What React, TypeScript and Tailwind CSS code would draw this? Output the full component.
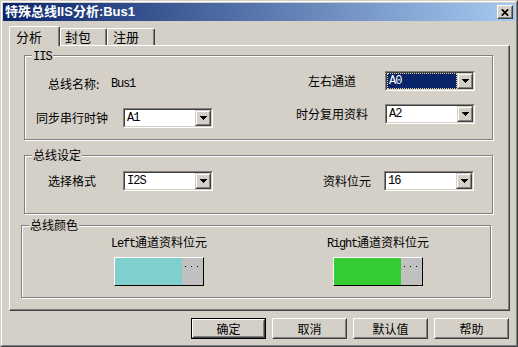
import React from "react";

function Arrow() {
  return (
    <svg width="7" height="4" viewBox="0 0 7 4" shapeRendering="crispEdges">
      <rect x="0" y="0" width="7" height="1" fill="black" />
      <rect x="1" y="1" width="5" height="1" fill="black" />
      <rect x="2" y="2" width="3" height="1" fill="black" />
      <rect x="3" y="3" width="1" height="1" fill="black" />
    </svg>
  );
}

function Combo({ value, selected }: { value: string; selected?: boolean }) {
  return (
    <div className="w-[90px] h-[20px] border border-t-[#808080] border-l-[#808080] border-r-white border-b-white">
      <div className="h-full border border-t-[#404040] border-l-[#404040] border-r-[#d4d0c8] border-b-[#d4d0c8] bg-white flex">
        {selected ? (
          <div className="flex-1 bg-[#0a246a] text-white border border-dotted border-[#e8d890] flex items-center pl-[1px]">
            <span className="font-['Liberation_Mono',monospace] tracking-[-1px] text-[12px] leading-[14px]">{value}</span>
          </div>
        ) : (
          <div className="flex-1 flex items-center pl-[2px] text-black">
            <span className="font-['Liberation_Mono',monospace] tracking-[-1px] text-[12px] leading-[14px]">{value}</span>
          </div>
        )}
        <div className="w-[16px] h-full border border-t-[#d4d0c8] border-l-[#d4d0c8] border-r-[#404040] border-b-[#404040] bg-[#d4d0c8]">
          <div className="h-full border border-t-white border-l-white border-r-[#808080] border-b-[#808080] flex items-center justify-center">
            <Arrow />
          </div>
        </div>
      </div>
    </div>
  );
}

function Btn({ children, def }: { children: React.ReactNode; def?: boolean }) {
  const inner = (
    <div className="h-full border border-t-white border-l-white border-r-[#404040] border-b-[#404040]">
      <div className="h-full border border-t-[#d4d0c8] border-l-[#d4d0c8] border-r-[#808080] border-b-[#808080] flex items-center justify-center leading-[14px]">
        {children}
      </div>
    </div>
  );
  if (def) return <div className="w-[75px] h-[21px] border border-black">{inner}</div>;
  return <div className="w-[75px] h-[21px]">{inner}</div>;
}

function Group({
  label,
  className,
  children,
}: {
  label: React.ReactNode;
  className: string;
  children: React.ReactNode;
}) {
  return (
    <div className={"relative border border-[#808080] shadow-[inset_1px_1px_0_#fff,1px_1px_0_#fff] " + className}>
      <span className="absolute left-[7px] top-[-8px] bg-[#d4d0c8] px-[1px] h-[14px] leading-[14px] text-[12px] whitespace-nowrap">
        {label}
      </span>
      {children}
    </div>
  );
}

function ColorCol({ label, fill }: { label: string; fill: "teal" | "green" }) {
  return (
    <div className="w-[90px] flex flex-col items-center">
      <div className="h-[14px] leading-[14px] whitespace-nowrap">
        <span className="font-['Liberation_Mono',monospace] tracking-[-1.2px]">{label}</span>
        通道资料位元
      </div>
      <div className="mt-[8px] w-[90px] h-[29px] border border-t-white border-l-white border-r-black border-b-black flex">
        <div className={fill === "teal" ? "w-[67px] h-full bg-[#80cfcf]" : "w-[67px] h-full bg-[#33cc33]"} />
        <div className="flex-1 h-full bg-[#c0c0c0] flex gap-[5px] pl-[3px] pt-[8px]">
          <div className="w-[1px] h-[1px] bg-black" />
          <div className="w-[1px] h-[1px] bg-black" />
          <div className="w-[1px] h-[1px] bg-black" />
        </div>
      </div>
    </div>
  );
}

export default function App() {
  return (
    <div className="w-[518px] h-[347px] bg-[#d4d0c8] border border-t-[#d4d0c8] border-l-[#d4d0c8] border-r-[#404040] border-b-[#404040] font-['Noto_Sans_CJK_SC',sans-serif] text-[12px] text-black">
      <div className="h-full border border-t-white border-l-white border-r-[#808080] border-b-[#808080] p-[1px] flex flex-col">
        {/* Title bar */}
        <div className="h-[18px] bg-linear-to-r/srgb from-[#0a246a] to-[#a6caf0] flex items-center pl-[2px] pr-[2px]">
          <span className="text-white font-bold text-[13px] leading-[16px] font-['Liberation_Sans','Noto_Sans_CJK_SC',sans-serif]">
            特殊总线IIS分析:Bus1
          </span>
          <div className="ml-auto w-[16px] h-[14px] border border-t-white border-l-white border-r-[#404040] border-b-[#404040] bg-[#d4d0c8]">
            <div className="h-full border border-t-[#d4d0c8] border-l-[#d4d0c8] border-r-[#808080] border-b-[#808080] flex items-center justify-center">
              <svg width="8" height="7" viewBox="0 0 8 7">
                <path d="M0.8 0.3 L7.2 6.7 M7.2 0.3 L0.8 6.7" stroke="black" strokeWidth="1.7" />
              </svg>
            </div>
          </div>
        </div>

        <div className="pl-[6px] pr-[5px] mt-[5px] flex flex-col">
          {/* Tabs */}
          <div className="flex items-end h-[19px] text-[13px]">
            <div className="relative z-10 -mb-[1px] h-[20px] w-[51px] bg-[#d4d0c8] border-t border-l border-r border-t-white border-l-white border-r-[#404040] rounded-tl-[2px] rounded-tr-[2px] shadow-[inset_-1px_0_0_#808080] flex items-center pl-[6px] leading-[16px]">
              分析
            </div>
            <div className="h-[17px] w-[47px] border-t border-l border-r border-t-white border-l-white border-r-[#404040] rounded-tl-[2px] rounded-tr-[2px] shadow-[inset_-1px_0_0_#808080] flex items-center pl-[4px] leading-[16px]">
              封包
            </div>
            <div className="h-[17px] w-[48px] border-t border-l border-r border-t-white border-l-white border-r-[#404040] rounded-tl-[2px] rounded-tr-[2px] shadow-[inset_-1px_0_0_#808080] flex items-center pl-[5px] leading-[16px]">
              注册
            </div>
          </div>

          {/* Panel */}
          <div className="h-[266px] border border-t-white border-l-white border-r-[#404040] border-b-[#404040]">
            <div className="h-full border-r border-b border-r-[#808080] border-b-[#808080] pt-[9px] flex flex-col">
              <Group
                label={<span className="font-['Liberation_Mono',monospace] tracking-[-1px]">IIS</span>}
                className="ml-[14px] w-[469px] h-[85px]"
              >
                <div className="flex h-full">
                  <div className="flex flex-col pl-[11px] pt-[18px] gap-[14px]">
                    <div className="h-[20px] flex items-center pl-[12px]">
                      <span className="w-[63px] leading-[14px]">总线名称:</span>
                      <span className="font-['Liberation_Mono',monospace] tracking-[-1.2px] leading-[14px]">Bus1</span>
                    </div>
                    <div className="h-[20px] flex items-center">
                      <span className="w-[72px] text-center leading-[14px] whitespace-nowrap">同步串行时钟</span>
                      <div className="ml-[15px]">
                        <Combo value="A1" />
                      </div>
                    </div>
                  </div>
                  <div className="ml-auto flex flex-col pr-[17px] pt-[15px] gap-[13px]">
                    <div className="h-[20px] flex items-center">
                      <span className="w-[84px] text-center leading-[14px]">左右通道</span>
                      <div className="ml-[11px]">
                        <Combo value="A0" selected />
                      </div>
                    </div>
                    <div className="h-[20px] flex items-center">
                      <span className="w-[84px] text-center leading-[14px] whitespace-nowrap">时分复用资料</span>
                      <div className="ml-[11px]">
                        <Combo value="A2" />
                      </div>
                    </div>
                  </div>
                </div>
              </Group>

              <Group label="总线设定" className="ml-[14px] mt-[15px] w-[469px] h-[59px]">
                <div className="flex pt-[15px]">
                  <div className="flex items-center pl-[11px] h-[20px]">
                    <span className="w-[72px] text-center leading-[14px]">选择格式</span>
                    <div className="ml-[15px]">
                      <Combo value="I2S" />
                    </div>
                  </div>
                  <div className="ml-auto flex items-center pr-[18px] h-[20px]">
                    <span className="leading-[14px]">资料位元</span>
                    <div className="ml-[13px]">
                      <Combo value="16" />
                    </div>
                  </div>
                </div>
              </Group>

              <Group label="总线颜色" className="ml-[11px] mt-[11px] w-[470px] h-[73px]">
                <div className="flex pl-[92px] pt-[9px] gap-[129px]">
                  <ColorCol label="Left" fill="teal" />
                  <ColorCol label="Right" fill="green" />
                </div>
              </Group>
            </div>
          </div>

          {/* Buttons */}
          <div className="flex justify-end gap-[6px] mt-[7px] pr-[1px]">
            <Btn def>确定</Btn>
            <Btn>取消</Btn>
            <Btn>默认值</Btn>
            <Btn>帮助</Btn>
          </div>
        </div>
      </div>
    </div>
  );
}
